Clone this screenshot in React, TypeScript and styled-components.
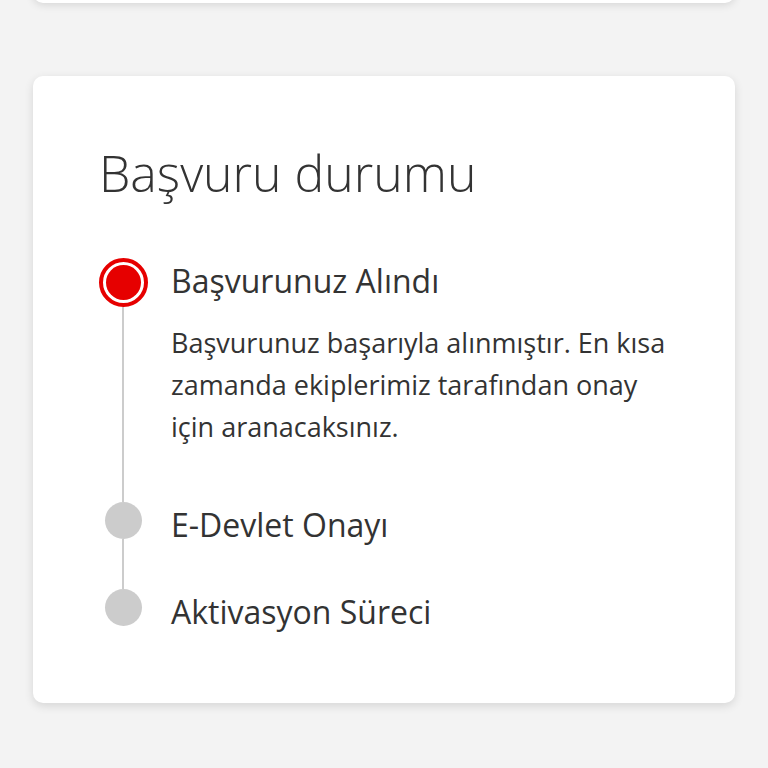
import React from 'react';
import styled, { createGlobalStyle } from 'styled-components';

const GlobalStyle = createGlobalStyle`
  html, body {
    margin: 0;
    padding: 0;
    background: #f3f3f3;
    font-family: "Open Sans", "Noto Sans", sans-serif;
    color: #333333;
  }
`;

const Page = styled.div`
  width: 768px;
  height: 768px;
  overflow: hidden;
  display: flex;
  flex-direction: column;
  align-items: center;
`;

const TopCard = styled.div`
  width: 702px;
  height: 40px;
  margin-top: -37px;
  background: #ffffff;
  border-radius: 0 0 10px 10px;
  box-shadow: 0 2px 8px rgba(0, 0, 0, 0.12);
`;

const Card = styled.section`
  width: 702px;
  height: 627px;
  margin-top: 73px;
  box-sizing: border-box;
  padding: 67px 40px 0 66px;
  background: #ffffff;
  border-radius: 10px;
  box-shadow: 0 3px 10px rgba(0, 0, 0, 0.12);
`;

const Title = styled.h2`
  margin: 0 0 55px;
  font-size: 50px;
  font-weight: 300;
  line-height: 60px;
  color: #333333;
`;

const Steps = styled.ol`
  list-style: none;
  margin: 0;
  padding: 0;
`;

const Step = styled.li`
  display: flex;
  gap: 24px;
`;

const Marker = styled.div`
  width: 48px;
  flex-shrink: 0;
  display: flex;
  flex-direction: column;
  align-items: center;
`;

const ActiveDot = styled.div`
  width: 49px;
  height: 49px;
  box-sizing: border-box;
  border-radius: 50%;
  border: 4px solid #e60000;
  padding: 3px;
  flex-shrink: 0;
  &::after {
    content: '';
    display: block;
    width: 100%;
    height: 100%;
    border-radius: 50%;
    background: #e60000;
  }
`;

const IdleDot = styled.div`
  width: 37px;
  height: 37px;
  border-radius: 50%;
  background: #cccccc;
  flex-shrink: 0;
`;

const Line = styled.div`
  width: 2px;
  flex: 1;
  background: #cccccc;
`;

const Content = styled.div<{ $pad: number }>`
  flex: 1;
  padding-bottom: ${({ $pad }) => $pad}px;
`;

const StepTitle = styled.h3`
  margin: 3px 0 0;
  font-size: 32px;
  font-weight: 400;
  line-height: 40px;
  color: #333333;
`;

const StepText = styled.p`
  margin: 21px 0 0;
  font-size: 27px;
  line-height: 42px;
  color: #333333;
  max-width: 500px;
`;

export default function App() {
  return (
    <Page>
      <GlobalStyle />
      <TopCard />
      <Card>
        <Title>Başvuru durumu</Title>
        <Steps>
          <Step>
            <Marker>
              <ActiveDot />
              <Line />
            </Marker>
            <Content $pad={54}>
              <StepTitle>Başvurunuz Alındı</StepTitle>
              <StepText>
                Başvurunuz başarıyla alınmıştır. En kısa zamanda ekiplerimiz tarafından onay için aranacaksınız.
              </StepText>
            </Content>
          </Step>
          <Step>
            <Marker>
              <IdleDot />
              <Line />
            </Marker>
            <Content $pad={44}>
              <StepTitle>E-Devlet Onayı</StepTitle>
            </Content>
          </Step>
          <Step>
            <Marker>
              <IdleDot />
            </Marker>
            <Content $pad={0}>
              <StepTitle>Aktivasyon Süreci</StepTitle>
            </Content>
          </Step>
        </Steps>
      </Card>
    </Page>
  );
}
